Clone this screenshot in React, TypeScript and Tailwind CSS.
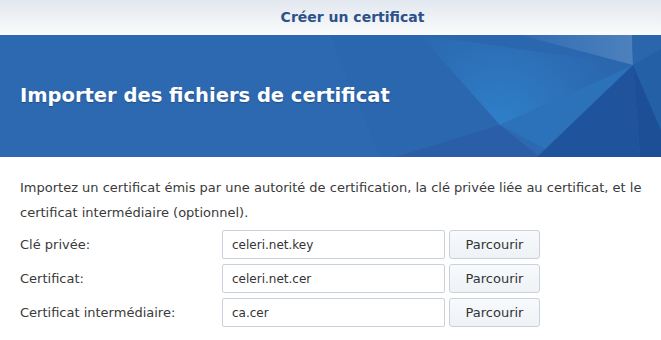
const font = { fontFamily: '"DejaVu Sans", Tahoma, Verdana, sans-serif' };

function Facets() {
  return (
    <svg
      className="absolute inset-0 h-full w-full"
      viewBox="0 0 661 122"
      preserveAspectRatio="none"
      aria-hidden
    >
      <defs>
        <linearGradient id="topband" x1="0" y1="0" x2="1" y2="0">
          <stop offset="0" stopColor="#ffffff" stopOpacity="0.02" />
          <stop offset="1" stopColor="#ffffff" stopOpacity="0.16" />
        </linearGradient>
        <radialGradient id="glow" cx="500" cy="92" r="120" gradientUnits="userSpaceOnUse">
          <stop offset="0" stopColor="#2f86cf" stopOpacity="0.8" />
          <stop offset="1" stopColor="#2f86cf" stopOpacity="0" />
        </radialGradient>
      </defs>
      <polygon points="330,0 520,0 633,30 500,90 395,122 380,122" fill="#2a66ae" opacity="0.5" />
      <polygon points="420,0 633,30 500,90" fill="url(#glow)" />
      <polygon points="633,30 500,90 560,122 540,122" fill="#2b7cc4" opacity="0.5" />
      <polygon points="520,0 632,0 633,30" fill="url(#topband)" />
      <polygon points="632,0 661,0 661,14 633,30" fill="#2b66ad" />
      <polygon points="500,90 395,122 540,122" fill="#2a5fa8" />
      <polygon points="633,30 537,122 640,122" fill="#1f549d" />
      <polygon points="633,30 661,14 661,95" fill="#2360a6" />
      <polygon points="633,30 661,95 661,122 640,122" fill="#1d4f96" />
    </svg>
  );
}

function Row({ label, value }: { label: string; value: string }) {
  return (
    <div className="flex h-[29px] items-center">
      <div className="w-[202px] text-[13px] text-[#3a3a3a]">{label}</div>
      <div className="flex h-full w-[223px] items-center rounded-[2px] border border-[#c9d2dc] bg-white px-[9px] text-[12px] text-[#333]">
        {value}
      </div>
      <button className="ml-[4px] h-full w-[91px] rounded-[3px] border border-[#c9d2dc] bg-gradient-to-b from-[#f8fafc] to-[#eef2f6] text-[13px] text-[#333]">
        Parcourir
      </button>
    </div>
  );
}

export default function App() {
  return (
    <main className="h-[340px] w-[661px] overflow-hidden bg-white" style={font}>
      <header className="flex h-[35px] items-center justify-center bg-gradient-to-b from-[#e2e8ef] to-[#fafbfc] pl-[44px]">
        <span className="text-[14px] font-bold text-[#2d5189]">Créer un certificat</span>
      </header>

      <section className="relative flex h-[122px] items-center overflow-hidden bg-[#2c69b1] px-[20px]">
        <Facets />
        <h1 className="relative text-[19.5px] font-bold text-white [text-shadow:0_1px_1px_rgba(0,0,0,0.25)]">
          Importer des fichiers de certificat
        </h1>
      </section>

      <div className="px-[20px] pt-[18px]">
        <p className="w-[636px] text-[13px] leading-[25px] text-[#3a3a3a]">
          Importez un certificat émis par une autorité de certification, la clé privée liée au certificat, et le
          certificat intermédiaire (optionnel).
        </p>
        <div className="mt-[5px] flex flex-col gap-[5px]">
          <Row label="Clé privée:" value="celeri.net.key" />
          <Row label="Certificat:" value="celeri.net.cer" />
          <Row label="Certificat intermédiaire:" value="ca.cer" />
        </div>
      </div>
    </main>
  );
}
